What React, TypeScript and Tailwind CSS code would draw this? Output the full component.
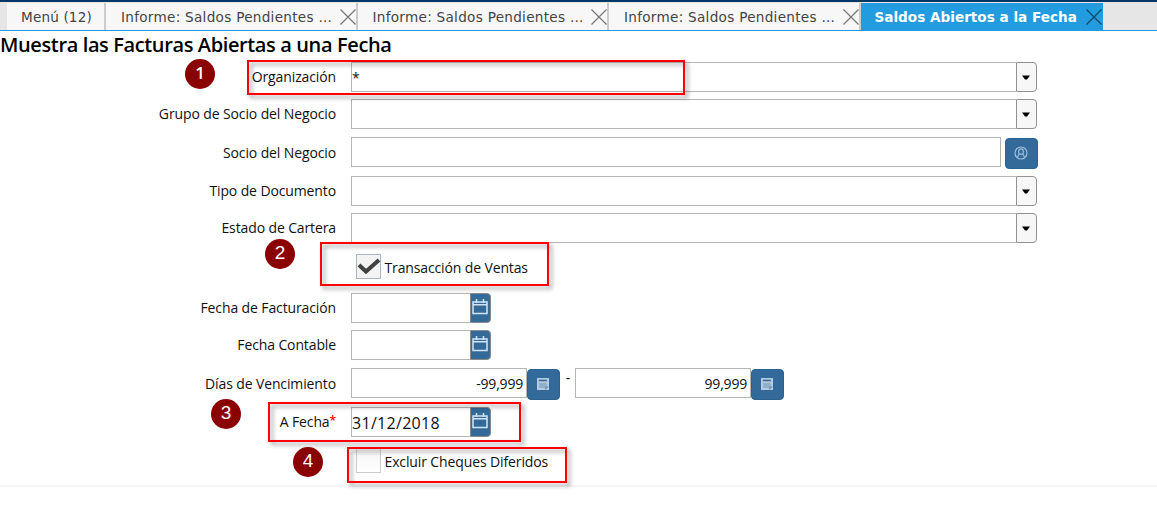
import type { ReactNode } from 'react';

const FONT = "font-['Open_Sans','Noto_Sans',sans-serif]";

function Cross({ dark = false }: { dark?: boolean }) {
  return (
    <svg width="16" height="16" viewBox="0 0 16 16" className={`absolute top-[6px] ${dark ? 'right-[1px]' : 'right-0'}`}>
      <path d="M.5 .5 15.5 15.5M15.5 .5 .5 15.5" stroke={dark ? '#0c4669' : '#777'} strokeWidth="1.2" fill="none" />
    </svg>
  );
}

function ReportTab() {
  return (
    <div className="relative flex h-[27px] w-[251.5px] items-center border-r-2 border-[#ccc] bg-[#f7f7f7] pl-[15px]">
      <span className="pt-px text-[13.6px] tracking-[0.28px] whitespace-nowrap text-[#444]">Informe: Saldos Pendientes ...</span>
      <Cross />
    </div>
  );
}

function Row({ label, required, height, low, children }: { label: string; required?: boolean; height: string; low?: boolean; children: ReactNode }) {
  return (
    <div className={`flex items-start ${height}`}>
      <div className={`flex w-[336px] items-center justify-end text-[14px] tracking-[-0.12px] whitespace-nowrap ${low ? 'h-[30px]' : 'h-[28px]'}`}>
        <span>{label}</span>
        {required && <span className="pb-px text-[12px] font-semibold text-[#f00]">*</span>}
      </div>
      <div className="ml-[15px] flex items-start">{children}</div>
    </div>
  );
}

function Select({ value = '' }: { value?: string }) {
  return (
    <div className="flex h-[30px] w-[686px]">
      <div className="flex flex-1 items-center border border-r-0 border-[#b5b5b5] text-[14px]">{value}</div>
      <div className="flex w-[21px] items-center justify-center rounded-r-[4px] border border-[#929292] bg-[#f7f7f7]">
        <svg width="8" height="5" viewBox="0 0 8 5" className="mr-px"><path d="M0 .5h8L5 4.5H3z" fill="#000" /></svg>
      </div>
    </div>
  );
}

function DateField({ value = '' }: { value?: string }) {
  return (
    <div className="flex h-[30px] w-[140px]">
      <div className="flex flex-1 items-center border border-r-0 border-[#b5b5b5] pt-px text-[16px] tracking-[0.3px]">{value}</div>
      <div className="flex w-[21px] items-start justify-center rounded-r-[4px] border border-[#8a8a8a] bg-[#336a99] pt-[5px]">
        <svg width="16" height="16" viewBox="0 0 16 16" fill="none" stroke="#d3e6f6" className="mr-px">
          <path d="M1 3h14v11.5H1zM1 5.7h14M4.5 0v4M11.5 0v4" strokeWidth="1.5" />
        </svg>
      </div>
    </div>
  );
}

function BlueButton({ children }: { children: ReactNode }) {
  return (
    <div className="mt-px flex h-[31px] w-[33px] items-center justify-center rounded-[4px] border border-[#286391] bg-[#336a99] pr-px pb-px">{children}</div>
  );
}

function NumberField({ value }: { value: string }) {
  return (
    <div className="flex">
      <div className="flex h-[30px] w-[176px] items-center justify-end border border-[#b5b5b5] pr-[3px] text-[14px] tracking-[-0.2px]">{value}</div>
      <BlueButton>
        <svg width="12" height="12" viewBox="0 0 12 12">
          <path d="M0 0h12v12H0z" fill="#b5cbe0" />
          <path d="M2 2.5h8" stroke="#336a99" strokeWidth="1.6" />
          <path d="M2 5h8v5H2z" fill="#8fb0cd" />
          <path d="M8 12V8.5h4z" fill="#6f98bd" />
        </svg>
      </BlueButton>
    </div>
  );
}

function Badge({ n, place }: { n: number; place: string }) {
  return (
    <div className={`absolute flex size-[30px] items-center justify-center rounded-full bg-[#8b0000] pb-px text-white ${place}`}>
      {n === 1 ? (
        <span className="pb-px text-[17px] font-semibold">{n}</span>
      ) : (
        <span className="font-['Liberation_Sans',sans-serif] text-[19px]">{n}</span>
      )}
    </div>
  );
}

function Highlight({ place }: { place: string }) {
  return <div className={`absolute border-2 border-[#f00] drop-shadow-[3px_3px_2px_rgba(0,0,0,0.4)] ${place}`} />;
}

export default function App() {
  return (
    <div className={`relative h-[528px] w-[1157px] overflow-hidden bg-white text-[#111] ${FONT}`}>
      <div className="flex h-[31px] items-end border-t-2 border-b border-t-[#003764] border-b-[#229bdf] bg-[#e6e6e6] pl-[7px] font-['DejaVu_Sans',sans-serif]">
        <div className="flex h-[27px] w-[99px] items-center border-r-2 border-[#ccc] bg-[#f7f7f7] pl-[14px]">
          <span className="pt-px text-[13.6px] tracking-[0.15px] whitespace-nowrap text-[#444]">Menú (12)</span>
        </div>
        <ReportTab />
        <ReportTab />
        <ReportTab />
        <div className="relative flex h-[27px] w-[242px] items-center bg-[#229bdf] pl-[14px]">
          <span className="pt-px text-[13.6px] font-bold whitespace-nowrap text-white">Saldos Abiertos a la Fecha</span>
          <Cross dark />
        </div>
      </div>
      <h1 className="h-[31px] text-[20px] leading-[27px] font-semibold tracking-[-0.38px] whitespace-nowrap text-black">Muestra las Facturas Abiertas a una Fecha</h1>
      <div className="h-[425px] border-b-2 border-[#f5f5f5]">
        <Row label="Organización" height="h-[37px]"><Select value="*" /></Row>
        <Row label="Grupo de Socio del Negocio" height="h-[38px]"><Select /></Row>
        <Row label="Socio del Negocio" height="h-[39px]" low>
          <div className="mr-1 h-[30px] w-[650px] border border-[#b5b5b5]" />
          <BlueButton>
            <svg width="14" height="14" viewBox="0 0 14 14" fill="none" stroke="#9dbddb">
              <circle cx="7" cy="7" r="6" strokeWidth="1.2" />
              <path d="M4.7 5.2c0-3 4.6-3 4.6 0v1.6c0 2-4.6 2-4.6 0zM5.2 8 3.5 11M8.8 8 10.5 11" strokeWidth="1.2" />
            </svg>
          </BlueButton>
        </Row>
        <Row label="Tipo de Documento" height="h-[37px]"><Select /></Row>
        <Row label="Estado de Cartera" height="h-[41px]"><Select /></Row>
        <div className="flex h-[39px] items-start pl-[356px]">
          <div className="flex size-[25px] items-center justify-center border border-[#a9b7c4] bg-[#f3f3f3]">
            <svg width="23" height="18" viewBox="0 0 23 18"><path d="M2 7 9 13.5 22 2" fill="none" stroke="#414141" strokeWidth="4" /></svg>
          </div>
          <span className="ml-[3.5px] pt-1 text-[14px] leading-[20px] tracking-[-0.13px] whitespace-nowrap">Transacción de Ventas</span>
        </div>
        <Row label="Fecha de Facturación" height="h-[37px]"><DateField /></Row>
        <Row label="Fecha Contable" height="h-[38px]"><DateField /></Row>
        <Row label="Días de Vencimiento" height="h-[39px]" low>
          <NumberField value="-99,999" />
          <span className="w-[15px] pl-px text-center text-[14px] leading-[19px]">-</span>
          <NumberField value="99,999" />
        </Row>
        <Row label="A Fecha" required height="h-[41px]"><DateField value="31/12/2018" /></Row>
        <div className="flex items-start pl-[356px]">
          <div className="size-[25px] border border-[#ccc] bg-linear-to-b from-[#f5f5f5] to-white" />
          <span className="ml-[3.5px] pt-1 text-[14px] leading-[20px] tracking-[-0.12px] whitespace-nowrap">Excluir Cheques Diferidos</span>
        </div>
      </div>
      <Highlight place="left-[247px] top-[60px] h-[35px] w-[438px]" />
      <Highlight place="left-[320px] top-[242px] h-[44px] w-[229px]" />
      <Highlight place="left-[268px] top-[402px] h-[40px] w-[253px]" />
      <Highlight place="left-[347px] top-[447px] h-[36px] w-[220px]" />
      <Badge n={1} place="left-[185px] top-[59px]" />
      <Badge n={2} place="left-[265px] top-[239px]" />
      <Badge n={3} place="left-[211px] top-[399px]" />
      <Badge n={4} place="left-[293px] top-[447px]" />
    </div>
  );
}
